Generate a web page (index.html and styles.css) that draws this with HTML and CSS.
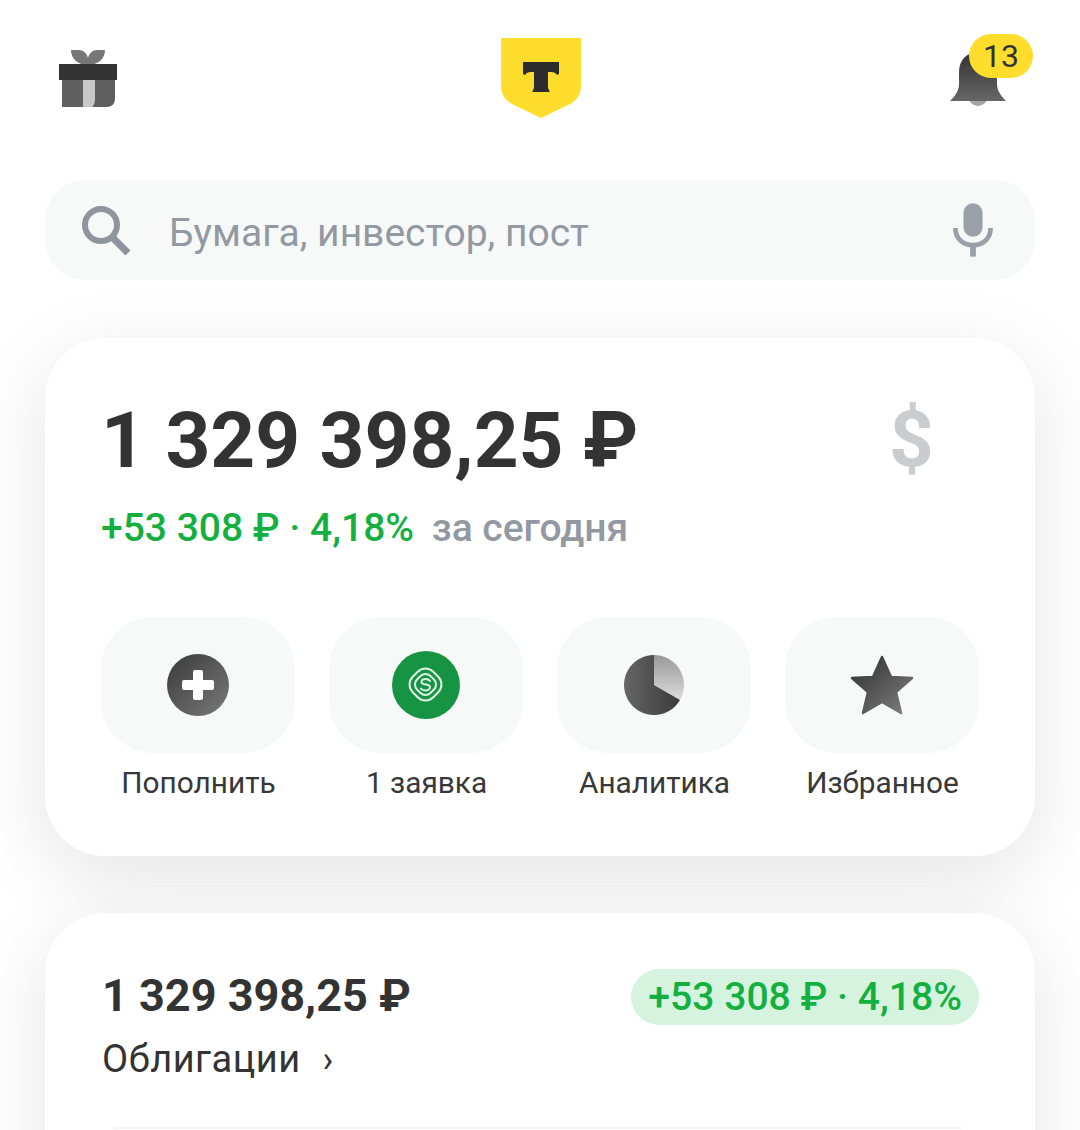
FILE: index.html
```html
<!DOCTYPE html>
<html lang="ru">
<head>
    <meta charset="UTF-8">
    <title>Пульс</title>
    <link rel="stylesheet" href="styles.css">
</head>
<body>
<div class="page">
    <header class="top">
        <svg class="gift" width="58" height="58" viewBox="0 0 58 58">
            <path d="M12 0h8c4 0 8 3 9 8 1-5 5-8 9-8h8c0 8-6 15-17 15S12 8 12 0z" fill="#777"/>
            <rect x="3" y="30" width="25" height="27" fill="#5f5f5f"/>
            <path d="M34 30h22v18c0 6-3 9-9 9H33c1-2 2-4 2-8z" fill="#5f5f5f"/>
            <path d="M24 30h12v19c0 4-1 6-3 8h-9z" fill="#c8c8c8"/>
            <rect x="0" y="14" width="58" height="16" fill="#333"/>
        </svg>
        <svg class="logo" width="80" height="80" viewBox="0 0 80 80">
            <path d="M0 0h80v48c0 8-4 14-11 18L40 80 11 66C4 62 0 56 0 48z" fill="#ffdd2d"/>
            <path d="M22 24h36v12l-2 1c-1-2-3-3-6-3h-3v16l1.500 3v1h-17v-1l1.500-3V34h-3c-3 0-5 1-6 3l-2-1z" fill="#2c2c2c"/>
        </svg>
        <div class="bell-box">
            <svg class="bell" width="56" height="56" viewBox="0 0 56 56">
                <defs>
                    <linearGradient id="bellgrad" x1="0" y1="0" x2="0" y2="1">
                        <stop offset="0" stop-color="#333"/>
                        <stop offset="1" stop-color="#666"/>
                    </linearGradient>
                </defs>
                <circle cx="28" cy="44" r="10" fill="#a3a3a3"/>
                <path d="M28 0c-11 0-19 8-19 20v12c0 6-3 11-9 17h56c-6-6-9-11-9-17V20C47 8 39 0 28 0z" fill="url(#bellgrad)"/>
            </svg>
            <span class="badge">13</span>
        </div>
    </header>

    <div class="search">
        <svg class="search-ico" width="52" height="52" viewBox="0 0 52 52">
            <circle cx="21" cy="21" r="16" fill="none" stroke="#8f959e" stroke-width="6"/>
            <path d="M32 33l16 16" fill="none" stroke="#8f959e" stroke-width="7"/>
        </svg>
        <span class="search-text">Бумага, инвестор, пост</span>
        <svg class="mic" width="40" height="54" viewBox="0 0 42 56">
            <rect x="11" y="0" width="20" height="35" rx="10" fill="#9aa0a9"/>
            <path d="M2.500 26c0 11 8 18 18.500 18s18.500-7 18.500-18" fill="none" stroke="#9aa0a9" stroke-width="5"/>
            <rect x="18" y="43" width="6" height="13" fill="#9aa0a9"/>
        </svg>
    </div>

    <section class="card main-card">
        <div class="total-row">
            <div class="total">1 329 398,25 ₽</div>
            <div class="currency">$</div>
        </div>
        <div class="today">
            <span class="green">+53 308 ₽ · 4,18%</span>
            <span class="gray">за сегодня</span>
        </div>
        <div class="actions">
            <div class="action">
                <div class="tile">
                    <svg width="62" height="62" viewBox="0 0 62 62">
                        <defs>
                            <linearGradient id="plusgrad" x1="0" y1="0" x2="1" y2="1">
                                <stop offset="0" stop-color="#3a3a3a"/>
                                <stop offset="1" stop-color="#7a7a7a"/>
                            </linearGradient>
                        </defs>
                        <circle cx="31" cy="31" r="31" fill="url(#plusgrad)"/>
                        <path d="M28 16h6a2 2 0 0 1 2 2v8h9a2 2 0 0 1 2 2v6a2 2 0 0 1-2 2h-9v8a2 2 0 0 1-2 2h-6a2 2 0 0 1-2-2v-8h-9a2 2 0 0 1-2-2v-6a2 2 0 0 1 2-2h9v-8a2 2 0 0 1 2-2z" fill="#fff"/>
                    </svg>
                </div>
                <div class="action-name">Пополнить</div>
            </div>
            <div class="action">
                <div class="tile">
                    <svg width="68" height="68" viewBox="0 0 68 68">
                        <circle cx="34" cy="34" r="34" fill="#169444"/>
                        <g fill="none" stroke="#dff3e5" stroke-width="2" stroke-linecap="round">
                            <rect x="19" y="19" width="29" height="29" rx="11" transform="rotate(45 33.500 33.500)"/>
                            <rect x="24" y="24" width="19" height="19" rx="7" transform="rotate(45 33.500 33.500)"/>
                            <path d="M38 30c-1-1.500-2.500-2-4.500-2-2.500 0-4 1.500-4 3 0 4 8.500 1 8.500 5 0 2-2 3.500-4.500 3.500-2 0-3.500-.5-4.500-2"/>
                        </g>
                    </svg>
                </div>
                <div class="action-name">1 заявка</div>
            </div>
            <div class="action">
                <div class="tile">
                    <svg width="60" height="60" viewBox="0 0 60 60">
                        <defs>
                            <linearGradient id="piedark" x1="0" y1="0" x2="1" y2="0">
                                <stop offset="0" stop-color="#666"/>
                                <stop offset="1" stop-color="#3a3a3a"/>
                            </linearGradient>
                            <linearGradient id="pielight" x1="0" y1="0" x2="0" y2="1">
                                <stop offset="0" stop-color="#999"/>
                                <stop offset="1" stop-color="#dcdcdc"/>
                            </linearGradient>
                        </defs>
                        <path d="M30 30V0a30 30 0 0 1 26 45z" fill="url(#pielight)"/>
                        <path d="M30 0a30 30 0 1 0 26 45L30 30z" fill="url(#piedark)"/>
                    </svg>
                </div>
                <div class="action-name">Аналитика</div>
            </div>
            <div class="action">
                <div class="tile">
                    <svg width="64" height="60" viewBox="0 0 64 60">
                        <defs>
                            <linearGradient id="stargrad" x1="0" y1="0" x2="1" y2="1">
                                <stop offset="0" stop-color="#2e2e2e"/>
                                <stop offset="1" stop-color="#808080"/>
                            </linearGradient>
                        </defs>
                        <path d="M32 2l9 20 21 1-16 14 5 21-19-11-19 11 5-21L2 23l21-1z" fill="url(#stargrad)" stroke="url(#stargrad)" stroke-width="2.500" stroke-linejoin="round"/>
                    </svg>
                </div>
                <div class="action-name">Избранное</div>
            </div>
        </div>
    </section>

    <section class="card bond-card">
        <div class="bond-row">
            <div>
                <div class="bond-sum">1 329 398,25 ₽</div>
                <div class="bond-name">Облигации <span class="chev">›</span></div>
            </div>
            <div class="pill">+53 308 ₽ · 4,18%</div>
        </div>
        <div class="divider"></div>
    </section>
</div>
</body>
</html>
```

FILE: styles.css
```css
*{
    box-sizing:border-box;
}

html,body{
    margin:0;
    padding:0;
    background:#fff;
}

.page{
    width:1080px;
    height:1130px;
    overflow:hidden;
    padding:38px 45px 0;
    font-family:"Roboto","Liberation Sans",sans-serif;
    color:#333;
}

/* верхняя строка */
.top{
    display:grid;
    grid-template-columns:1fr auto 1fr;
    align-items:start;
    height:80px;
}

.top svg{
    display:block;
}

.gift{
    margin:12px 0 0 14px;
}

.logo{
    margin-left:1px;
}

.bell-box{
    position:relative;
    width:56px;
    height:56px;
    margin:14px 29px 0 auto;
}

.badge{
    position:absolute;
    left:19px;
    top:-18px;
    width:64px;
    height:44px;
    border-radius:22px;
    background:#ffdd2d;
    font-size:32px;
    line-height:44px;
    text-align:center;
    color:#333;
}

/* поиск */
.search{
    display:flex;
    align-items:center;
    height:100px;
    margin-top:62px;
    padding:0 42px 0 35px;
    border-radius:40px;
    background:#f7f9f9;
}

.search-text{
    flex:1;
    margin-left:37px;
    padding-top:6px;
    font-size:39px;
    color:#9299a2;
}

/* карточки */
.card{
    background:#fff;
    border-radius:60px;
    box-shadow:0 20px 80px rgba(0,0,0,.11);
}

.main-card{
    height:518px;
    margin-top:58px;
    padding:57px 56px 0;
}

.total-row{
    display:flex;
    justify-content:space-between;
    height:90px;
}

.total{
    font-size:78.300px;
    font-weight:700;
    line-height:90px;
}

.currency{
    width:42px;
    margin-right:48px;
    font-size:78px;
    font-weight:700;
    line-height:90px;
    color:#cacccf;
}

.today{
    margin-top:20px;
    font-size:39px;
    line-height:46px;
}

.green{
    font-weight:500;
    color:#14b03f;
}

.gray{
    margin-left:8px;
    font-weight:500;
    color:#9299a2;
}

.actions{
    display:flex;
    gap:34px;
    margin-top:66px;
}

.action{
    width:194px;
}

.tile{
    display:flex;
    align-items:center;
    justify-content:center;
    height:136px;
    border-radius:52px;
    background:#f7f9f9;
}

.action-name{
    margin-top:12px;
    padding-left:1px;
    font-size:29.800px;
    line-height:36px;
    text-align:center;
    color:#383838;
}

.bond-card{
    height:400px;
    margin-top:57px;
    padding:56px 56px 0 57px;
}

.bond-row{
    display:flex;
    justify-content:space-between;
    align-items:flex-start;
}

.bond-sum{
    margin-top:1px;
    font-size:45px;
    font-weight:700;
    line-height:52px;
}

.bond-name{
    margin-top:14px;
    font-size:38px;
    line-height:46px;
    letter-spacing:.5px;
}

.chev{
    margin-left:12px;
    font-size:36px;
}

.pill{
    height:56px;
    padding:0 17px;
    border-radius:28px;
    background:#d6f3df;
    font-size:39.100px;
    font-weight:500;
    line-height:56px;
    color:#14b03f;
}

.divider{
    height:2px;
    margin:44px 16px 0 11px;
    background:#f5f7f7;
}
```
